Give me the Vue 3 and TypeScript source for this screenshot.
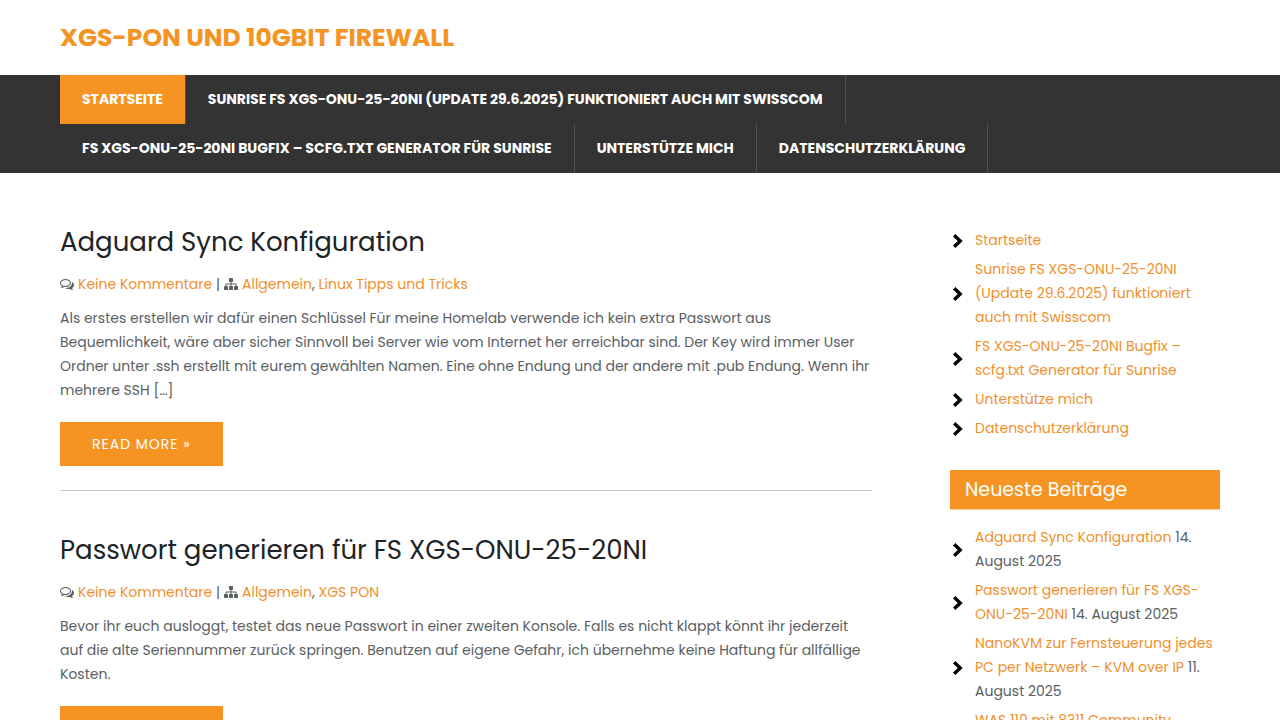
<script setup lang="ts">
interface Link {
  label: string
  current?: boolean
}

interface Post {
  title: string
  categories: string[]
  excerpt: string
}

interface Recent {
  title: string
  date: string
}

const pages: Link[] = [
  { label: 'Startseite', current: true },
  { label: 'Sunrise FS XGS-ONU-25-20NI (Update 29.6.2025) funktioniert auch mit Swisscom' },
  { label: 'FS XGS-ONU-25-20NI Bugfix – scfg.txt Generator für Sunrise' },
  { label: 'Unterstütze mich' },
  { label: 'Datenschutzerklärung' },
]

const posts: Post[] = [
  {
    title: 'Adguard Sync Konfiguration',
    categories: ['Allgemein', 'Linux Tipps und Tricks'],
    excerpt:
      'Als erstes erstellen wir dafür einen Schlüssel Für meine Homelab verwende ich kein extra Passwort aus Bequemlichkeit, wäre aber sicher Sinnvoll bei Server wie vom Internet her erreichbar sind. Der Key wird immer User Ordner unter .ssh erstellt mit eurem gewählten Namen. Eine ohne Endung und der andere mit .pub Endung. Wenn ihr mehrere SSH […]',
  },
  {
    title: 'Passwort generieren für FS XGS-ONU-25-20NI',
    categories: ['Allgemein', 'XGS PON'],
    excerpt:
      'Bevor ihr euch ausloggt, testet das neue Passwort in einer zweiten Konsole. Falls es nicht klappt könnt ihr jederzeit auf die alte Seriennummer zurück springen. Benutzen auf eigene Gefahr, ich übernehme keine Haftung für allfällige Kosten.',
  },
]

const recent: Recent[] = [
  { title: 'Adguard Sync Konfiguration', date: '14. August 2025' },
  { title: 'Passwort generieren für FS XGS-ONU-25-20NI', date: '14. August 2025' },
  { title: 'NanoKVM zur Fernsteuerung jedes PC per Netzwerk – KVM over IP', date: '11. August 2025' },
  { title: 'WAS 110 mit 8311 Community Firmware', date: '11. August 2025' },
]
</script>

<template>
  <div class="page">
    <header class="masthead">
      <div class="container">
        <h1 class="site-title"><a href="#">XGS-PON und 10Gbit Firewall</a></h1>
      </div>
    </header>

    <nav class="menu" aria-label="Hauptmenü">
      <ul class="container menu-list">
        <li v-for="page in pages" :key="page.label">
          <a href="#" :class="{ current: page.current }">{{ page.label }}</a>
        </li>
      </ul>
    </nav>

    <div class="container layout">
      <main class="posts">
        <article v-for="post in posts" :key="post.title" class="post">
          <h2><a href="#">{{ post.title }}</a></h2>
          <div class="meta">
            <svg class="icon" viewBox="0 0 1792 1792" aria-hidden="true">
              <path d="M704 384q-153 0-286 52t-211.500 141-78.500 191q0 82 53 158t149 132l97 56-35 84q34-20 62-39l44-31 53 10q78 14 153 14 153 0 286-52t211.500-141 78.500-191-78.500-191-211.500-141-286-52zm0-128q191 0 353.500 68.500t256.500 186.500 94 257-94 257-256.500 186.500-353.500 68.500q-86 0-176-16-124 88-278 128-36 9-86 16h-3q-11 0-20.500-8t-11.500-21q-1-3-1-6.500t.5-6.500 2-6l2.500-5 3.500-5.500 4-5 4.500-5 4-4.500q5-6 23-25t26-29.500 22.500-29 25-38.500 20.500-44q-124-72-195-177t-71-224q0-139 94-257t256.500-186.500 353.500-68.500zm822 1169q10 24 20.500 44t25 38.500 22.500 29 26 29.500 23 25q1 1 4 4.500t4.500 5 4 5 3.500 5.500l2.500 5 2 6 .5 6.500-1 6.500q-3 14-13 22t-22 7q-50-7-86-16-154-40-278-128-90 16-176 16-271 0-472-132 58 4 88 4 161 0 309-45t264-129q125-92 192-212t67-254q0-77-23-152 129 71 204 178t75 230q0 120-71 224.500t-195 176.500z" />
            </svg>
            <span><a href="#">Keine Kommentare</a> | </span>
            <svg class="icon" viewBox="0 0 1792 1792" aria-hidden="true">
              <path d="M1792 1248v320q0 40-28 68t-68 28h-320q-40 0-68-28t-28-68v-320q0-40 28-68t68-28h96v-192H960v192h96q40 0 68 28t28 68v320q0 40-28 68t-68 28H736q-40 0-68-28t-28-68v-320q0-40 28-68t68-28h96V960H320v192h96q40 0 68 28t28 68v320q0 40-28 68t-68 28H96q-40 0-68-28t-28-68v-320q0-40 28-68t68-28h96V960q0-52 38-90t90-38h512V640h-96q-40 0-68-28t-28-68V224q0-40 28-68t68-28h320q40 0 68 28t28 68v320q0 40-28 68t-68 28h-96v192h512q52 0 90 38t38 90v192h96q40 0 68 28t28 68z" />
            </svg>
            <span>
              <template v-for="(category, index) in post.categories" :key="category">
                <template v-if="index > 0">, </template><a href="#">{{ category }}</a>
              </template>
            </span>
          </div>
          <p>{{ post.excerpt }}</p>
          <a href="#" class="read-more">Read More »</a>
        </article>
      </main>

      <aside class="sidebar">
        <ul class="arrow-list">
          <li v-for="page in pages" :key="page.label">
            <svg class="arrow" viewBox="0 0 12 16" aria-hidden="true">
              <path d="M2.200 3.200 L8.200 9 L2.200 14.800" />
            </svg>
            <span><a href="#">{{ page.label }}</a></span>
          </li>
        </ul>
        <h2 class="widget-title">Neueste Beiträge</h2>
        <ul class="arrow-list">
          <li v-for="entry in recent" :key="entry.title">
            <svg class="arrow" viewBox="0 0 12 16" aria-hidden="true">
              <path d="M2.200 3.200 L8.200 9 L2.200 14.800" />
            </svg>
            <span><a href="#">{{ entry.title }}</a> {{ entry.date }}</span>
          </li>
        </ul>
      </aside>
    </div>
  </div>
</template>

<style>
body {
  margin: 0;
  background: #fff;
}
</style>

<style scoped>
.page {
  font-family: Poppins, Inter, sans-serif;
  font-size: 14px;
  line-height: 24px;
  color: #5a6063;
}

a {
  color: #f0902c;
  text-decoration: none;
}

h1,
h2,
p,
ul {
  margin: 0;
  padding: 0;
}

ul {
  list-style: none;
}

.container {
  max-width: 1160px;
  margin: 0 auto;
}

.masthead {
  padding: 20px 0 19px;
}

.site-title {
  font-size: 25px;
  line-height: 36px;
  font-weight: 700;
  text-transform: uppercase;
}

.site-title a {
  color: #f59423;
}

.menu {
  background: #333;
}

.menu-list {
  display: flex;
  flex-wrap: wrap;
}

.menu-list a {
  display: block;
  padding: 0 22px;
  border-right: 1px solid #505050;
  font-weight: 700;
  line-height: 49px;
  text-transform: uppercase;
  color: #fff;
}

.menu-list .current {
  background: #f59423;
}

.layout {
  display: grid;
  grid-template-columns: minmax(0, 812px) minmax(0, 270px);
  justify-content: space-between;
  padding: 51px 0;
}

.post {
  padding-bottom: 24px;
  border-bottom: 1px solid #c8c8c8;
  margin-bottom: 41px;
}

.post h2 {
  font-size: 26px;
  line-height: 36px;
  font-weight: 400;
}

.post h2 a {
  color: #202326;
}

.meta {
  display: flex;
  align-items: center;
  gap: 4px;
  margin: 12px 0 10px;
}

.icon {
  width: 14px;
  height: 14px;
  fill: currentColor;
}

.read-more {
  display: inline-block;
  margin-top: 20px;
  padding: 0 32px;
  background: #f59423;
  color: #fff;
  line-height: 44px;
  letter-spacing: 1px;
  text-transform: uppercase;
}

.sidebar {
  padding-top: 4px;
}

.arrow-list {
  display: grid;
  gap: 5px;
}

.arrow-list li {
  display: flex;
  align-items: center;
  gap: 11px;
  padding-left: 2px;
}

.arrow {
  flex: none;
  width: 12px;
  height: 16px;
  fill: none;
  stroke: #000;
  stroke-width: 3.4;
}

.widget-title {
  margin: 30px 0 15px;
  padding: 0 15px;
  border-bottom: 1px solid #f3cfa2;
  background: #f59423;
  color: #fff;
  font-size: 19px;
  font-weight: 400;
  line-height: 39px;
}
</style>
